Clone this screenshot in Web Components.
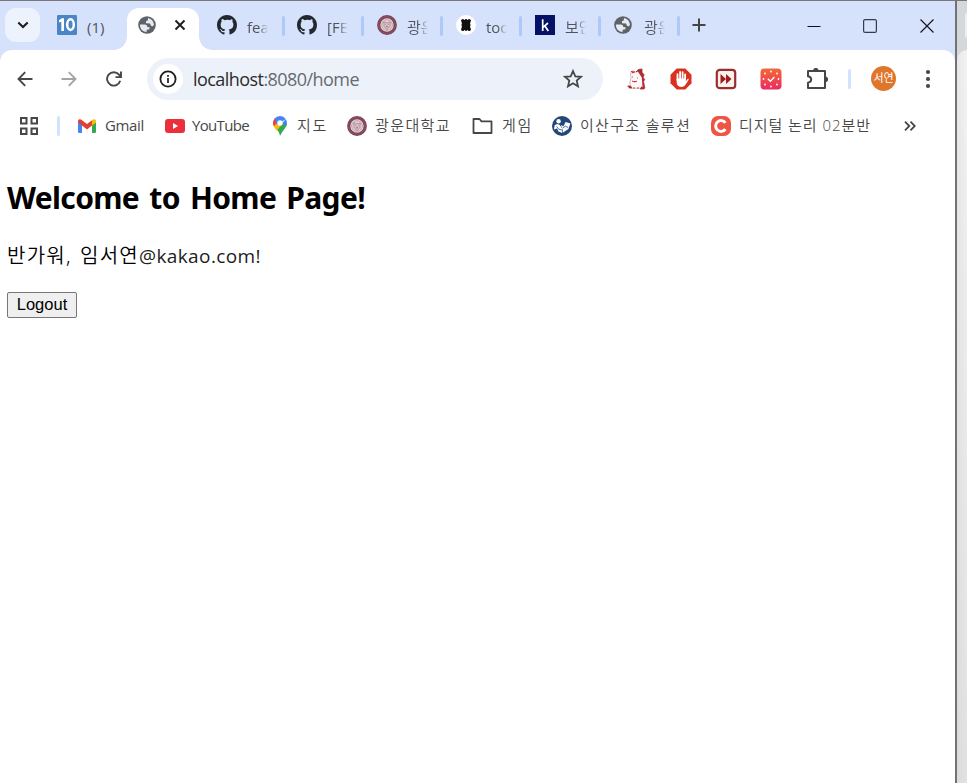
<!DOCTYPE html>
<html lang="ko"><head><meta charset="utf-8"><title>Home</title>
<style>html,body{margin:0;height:100%;overflow:hidden;background:#fff}</style></head><body>
<browser-desktop></browser-desktop>
<script>
const UI='"Open Sans","Noto Sans CJK KR",sans-serif';
const globe='<svg viewBox="0 0 20 20"><circle cx="10" cy="10" r="9.8" fill="#5f6368"/><path d="M2.200 9.400 7.800 9.400Q10.500 9.600 10.300 12.200L12.800 12.600 12.600 14.800 9.700 15.200 9.500 17.800Q3.500 17.500 2.200 11.500ZM11.200 2.200Q17.400 3.600 17.800 10L15.700 11.600 14.200 10.600 13.500 8.400 8.900 8.100 8.800 5.800 10.800 5Z" fill="#e6eaf3"/></svg>';
const seal='<svg viewBox="0 0 20 20"><circle cx="10" cy="10" r="8.300" fill="#e6d8dd" stroke="#7d4354" stroke-width="3.200"/><circle cx="10" cy="10" r="8.300" fill="none" stroke="#a87a88" stroke-width=".6" stroke-dasharray="1 1"/><circle cx="10" cy="10" r="5.400" fill="#dfccd2" stroke="#b99aa4" stroke-width=".8"/><path d="m6.800 6.800 1.800 1h2.800l1.800-1-.4 4.800-2.800 3-2.800-3Zm1.400 2.600h1m1.600 0h1M10 10v3m-1.300-1.400h2.600" fill="none" stroke="#a8798a" stroke-width=".8"/></svg>';
const ICONS={
down:'<svg viewBox="0 0 12 12"><path d="m1.3 3.500 4.700 4.600 4.700-4.600" fill="none" stroke="#1b1d20" stroke-width="2.100"/></svg>',
ten:'<svg viewBox="0 0 20 20"><rect width="20" height="20" rx="1.300" fill="#4a86c5"/><path d="M2 5.300 4.800 3.200H7V16H4.300V6.700L2 7.600Z" fill="#fff"/><ellipse cx="13.500" cy="9.600" rx="3.300" ry="5.300" fill="none" stroke="#fff" stroke-width="2.500"/></svg>',
globe,seal,
x:'<svg viewBox="0 0 12 12"><path d="m1.500 1.500 9 9m0-9-9 9" stroke="#1b1d20" stroke-width="1.900"/></svg>',
github:'<svg viewBox="0 0 16 16"><path fill="#22282e" d="M8 0C3.58 0 0 3.58 0 8c0 3.54 2.29 6.53 5.47 7.59.4.07.55-.17.55-.38 0-.19-.01-.82-.01-1.49-2.01.37-2.53-.49-2.69-.94-.09-.23-.48-.94-.82-1.13-.28-.15-.68-.52-.01-.53.63-.01 1.08.58 1.23.82.72 1.21 1.87.87 2.33.66.07-.52.28-.87.51-1.07-1.78-.2-3.64-.89-3.64-3.95 0-.87.31-1.59.82-2.15-.08-.2-.36-1.02.08-2.12 0 0 .67-.21 2.2.82A7.7 7.7 0 0 1 8 3.87c.68 0 1.36.09 2 .27 1.53-1.04 2.2-.82 2.2-.82.44 1.1.16 1.92.08 2.12.51.56.82 1.27.82 2.15 0 3.07-1.87 3.75-3.65 3.95.29.25.54.73.54 1.48 0 1.07-.01 1.93-.01 2.2 0 .21.15.46.55.38A8 8 0 0 0 16 8c0-4.42-3.58-8-8-8Z"/></svg>',
stamp:'<svg viewBox="0 0 20 20"><circle cx="10" cy="10" r="10" fill="#fff"/><rect x="5.600" y="5" width="8.800" height="10" fill="#111"/><g fill="#111"><circle cx="6.800" cy="5.600" r="1.600"/><circle cx="10" cy="5.400" r="1.400"/><circle cx="13.200" cy="5.600" r="1.600"/><circle cx="6.800" cy="14.400" r="1.600"/><circle cx="10" cy="14.600" r="1.400"/><circle cx="13.200" cy="14.400" r="1.600"/></g><path d="M5 8.300h.8M5 11.700h.8M14.200 8.300h.8M14.200 11.700h.8" stroke="#fff"/></svg>',
k:'<svg viewBox="0 0 20 20"><path fill="#051165" d="M0 0h20v20H0Z"/><path d="M7.700 4.200V16M13 8l-5 4.300M9.800 10.700 13.300 16" fill="none" stroke="#fff" stroke-width="1.700"/></svg>',
plus:'<svg viewBox="0 0 14 14"><path d="M7 .5v13M.5 7h13" stroke="#444746" stroke-width="2"/></svg>',
min:'<svg viewBox="0 0 14 14"><path d="M.5 7.500h13" stroke="#111"/></svg>',
max:'<svg viewBox="0 0 14 14"><rect x=".6" y=".6" width="12.800" height="12.800" rx="1.500" fill="none" stroke="#343b4b" stroke-width="1.200"/></svg>',
close:'<svg viewBox="0 0 14 14"><path d="m.5.5 13 13m0-13-13 13" stroke="#161820" stroke-width="1.200"/></svg>',
back:'<svg viewBox="0 0 16 16"><path d="M15.500 8H1.500M8.200 1.200 1.500 8l6.700 6.800" fill="none" stroke="#474747" stroke-width="1.900"/></svg>',
fwd:'<svg viewBox="0 0 16 16"><path d="M.5 8h14M7.800 1.200 14.500 8l-6.700 6.800" fill="none" stroke="#a4a4a4" stroke-width="1.900"/></svg>',
reload:'<svg viewBox="0 0 16 16"><path d="M14.200 9.800A6.700 6.700 0 1 1 13 3.700l1.600 1.800M15 .5v5.600H9.500" fill="none" stroke="#474747" stroke-width="1.900"/></svg>',
info:'<svg viewBox="0 0 18 18"><circle cx="9" cy="9" r="7.600" fill="none" stroke="#1f1f1f" stroke-width="1.800"/><path d="M9 8v5M9 5v1.800" stroke="#1f1f1f" stroke-width="1.700"/></svg>',
star:'<svg viewBox="0 0 20 20"><path d="m10 2 2.300 5.300 5.800.5-4.400 3.800L15 17.300l-5-3-5 3 1.300-5.700-4.400-3.800 5.800-.5Z" fill="none" stroke="#474747" stroke-width="1.800"/></svg>',
horse:'<svg viewBox="0 0 20 22"><path d="M5 10 4.500 5 6.800 2.800 9 4.200 14 2l2 2 .6 8 1.200 7-3 1.200H5L3.800 15Z" fill="#fff7f7" stroke="#d9a4a7" stroke-width=".8"/><path d="m5 3 1.700 2L9 3.800M10 4l2.300-2.500L16 1v3.500l2 2-.8 3 1.500 2-1.200 2 1 5-1.500.4-.8-9.500-2-3L12 3ZM1.500 18h3l1.300 2H3M15 19l4 .3-1 1.700H14M7 20h2m2 0h2M6 9h1m4 1h1M6 13l3 1 2-1" fill="#ac2b31" stroke="#ac2b31" stroke-width=".8"/></svg>',
hand:'<svg viewBox="0 0 22 22"><path d="M6.700.5h8.600l6.200 6.200v8.600l-6.200 6.200H6.700L.5 15.300V6.700Z" fill="#d9301f"/><path d="M7.500 12V6.200m2.600 5V4m2.500 7V4.200m2.500 7V6.300" stroke="#fff" stroke-width="1.800" stroke-linecap="round"/><path d="M6.600 10.500h9.300v2.700L17.500 11c.9-.6 1.600.1 1 .9l-3.200 5.200Q14 19 11.200 19 6.600 18.800 6.600 13Z" fill="#fff"/></svg>',
ff:'<svg viewBox="0 0 22 22"><rect x="1.800" y="1.800" width="18.400" height="18.400" rx="3" fill="#faf1ef" stroke="#992f2c" stroke-width="2.200"/><path d="m5.500 6 5.500 5-5.500 5Zm5.500 0 5.500 5-5.500 5Z" fill="#a11d1b"/></svg>',
clock:'<svg viewBox="0 0 22 22"><defs><linearGradient id="g" x2="0" y2="1"><stop stop-color="#f26b35"/><stop offset="1" stop-color="#eb2a62"/></linearGradient></defs><rect x=".5" y=".5" width="21" height="21" rx="4" fill="url(#g)"/><g fill="#fff"><circle cx="11" cy="3.500" r=".9"/><circle cx="11" cy="18.500" r=".9"/><circle cx="3.500" cy="11" r=".9"/><circle cx="18.500" cy="11" r=".9"/><circle cx="5" cy="5.500" r=".9"/><circle cx="17" cy="5.500" r=".9"/><circle cx="5" cy="16.500" r=".9"/><circle cx="17" cy="16.500" r=".9"/></g><path d="m7.800 10.700 2.600 2.500 4-4.100" fill="none" stroke="#fff" stroke-width="1.400"/></svg>',
puzzle:'<svg viewBox="0 0 22 22"><path d="M2 3h17v17H2v-5.300q3.200-.7 3.200-3.200T2 8.300Z" fill="none" stroke="#474747" stroke-width="2" stroke-linejoin="round"/><path d="M7 2.700a2.800 2.800 0 0 1 5.600 0ZM19.300 8.600a2.800 2.800 0 0 1 0 5.600Z" fill="#474747"/></svg>',
dots:'<svg viewBox="0 0 6 20"><g fill="#474747"><circle cx="3" cy="3" r="2.100"/><circle cx="3" cy="10" r="2.100"/><circle cx="3" cy="17" r="2.100"/></g></svg>',
grid:'<svg viewBox="0 0 18 18"><path d="M1 1h5.500v5.500H1Zm10.500 0H17v5.500h-5.500ZM1 11.500h5.500V17H1Zm10.500 0H17V17h-5.500Z" fill="none" stroke="#474747" stroke-width="2"/></svg>',
gmail:'<svg viewBox="0 0 18 14"><path d="M0 3v9.700Q0 14 1.300 14H4V5Z" fill="#4285f4"/><path d="M14 5v9h2.700q1.300 0 1.300-1.300V3Z" fill="#34a853"/><path d="M14 1.200 15 .5q3-1.200 3 1.800v1.200L14 6.600Z" fill="#fbbc04"/><path d="m4 6.600-4-3V2.300q0-3 3-1.800L9 5l5-3.800v5.400l-5 3.800Z" fill="#df4134"/></svg>',
yt:'<svg viewBox="0 0 20 14"><rect width="20" height="14" rx="3" fill="#ec303b"/><path d="m8 4 5 3-5 3Z" fill="#fff"/></svg>',
map:'<svg viewBox="0 0 14 20"><path d="M7 20Q6.400 15.500 1.700 11.300L9.500 6 14 7q0 3.200-2.500 6T7 20Z" fill="#34a853"/><path d="M.5 9.500Q2 13 3.800 14.600L11 6 7 5Z" fill="#fbbc04"/><path d="M1.600 2.600A7 7 0 0 0 .8 10.200L6 5Z" fill="#ea4335"/><path d="M1.600 2.600A7 7 0 0 1 12.700 3L4 9Z" fill="#4285f4"/><path d="M12.700 3A7 7 0 0 1 13.300 9.800L9 7.500Z" fill="#4285f4"/><circle cx="7" cy="7" r="2.700" fill="#fff"/></svg>',
folder:'<svg viewBox="0 0 21 16"><path d="M1.500 1h6l2 2.300h10v11.700h-18Z" fill="none" stroke="#474747" stroke-width="1.800" stroke-linejoin="round"/></svg>',
reader:'<svg viewBox="0 0 20 20"><circle cx="10" cy="10" r="10" fill="#24477a"/><circle cx="6.600" cy="5.200" r="2.200" fill="#fff"/><path d="M2.600 9.200 5 8l2.500.8 2.700 3.700v4.600L6.500 15.500 5 12.500 2 13.500Z" fill="#fff"/><path d="m8.700 9 2.700 1.200L13.600 6l4.800 1.500-2 5.600-5.300 3.300-1-4.400Z" fill="#fff"/><path d="m4.600 10.500 2.200 2.700 3.800 1M10.800 11.800l2.700-1.600 2.700 1.300" stroke="#24477a" fill="none" stroke-width=".8"/></svg>',
c:'<svg viewBox="0 0 20 20"><rect width="20" height="20" rx="7" fill="#ee5545"/><path d="M14.400 6.800A5.400 5.400 0 1 0 14.400 13.200" fill="none" stroke="#fff" stroke-width="3"/></svg>',
more:'<svg viewBox="0 0 12 10"><path d="m1 .7 4.300 4.300L1 9.300M6.500.7 10.800 5 6.500 9.300" fill="none" stroke="#474747" stroke-width="1.800"/></svg>'
};
function el(name,html,after){customElements.define(name,class extends HTMLElement{connectedCallback(){if(this.shadowRoot)return;const a=n=>this.getAttribute(n)||'';this.attachShadow({mode:'open'}).innerHTML=html(a);if(after)after(this,a)}})}
// <ui-icon name w h>: an inline picture in a box of fixed size
el('ui-icon',a=>`<style>:host{display:block;flex:none;width:${a('w')}px;height:${a('h')||a('w')}px}svg{display:block;width:100%;height:100%}</style>${ICONS[a('name')]}`);
// <fit-text w>: one line of text, tracked so that it fills its width
el('fit-text',()=>`<style>:host{display:block;flex:none;white-space:nowrap}span{display:inline-block;white-space:pre}</style><span><slot></slot></span>`,(t,a)=>{const s=t.shadowRoot.querySelector('span'),w=+a('w');t.style.width=w+'px';s.style.letterSpacing=(w-s.getBoundingClientRect().width)/t.textContent.length+'px'});
el('tab-item',a=>`<style>:host{display:flex;flex:none;box-sizing:border-box;width:${a('w')}px;height:49px;padding-left:${a('pad')||12}px;align-items:center;color:#50545a;font:15px/24px ${UI}}
ui-icon{margin:0 ${a('gap')||10}px 1px 0}.t{width:21px;overflow:hidden;white-space:nowrap;font-weight:${a('wt')||350};padding-top:3px;-webkit-mask:linear-gradient(90deg,#000 55%,transparent);mask:linear-gradient(90deg,#000 55%,transparent)}.plain{-webkit-mask:none;mask:none}
i{width:3px;height:20px;border-radius:2px;background:#adc8fa;margin-left:auto}</style><ui-icon name="${a('icon')}" w="${a('size')||20}"></ui-icon><div class="t ${a('plain')&&'plain'}"><slot></slot></div>${a('plain')?'':'<i></i>'}`);
el('active-tab',()=>`<style>:host{display:flex;flex:none;box-sizing:border-box;width:72px;height:42px;align-self:flex-end;background:#fff;border-radius:12px 12px 0 0;position:relative;padding:8px 0 0 11px;gap:18px}
.f{position:absolute;bottom:0;width:13px;height:13px}.l{left:-13px;background:radial-gradient(circle at 0 0,transparent 12.500px,#fff 13px)}.r{right:-13px;background:radial-gradient(circle at 100% 0,transparent 12.500px,#fff 13px)}ui-icon+ui-icon{margin-top:3px}</style><ui-icon name="globe" w="18"></ui-icon><ui-icon name="x" w="12"></ui-icon><b class="f l"></b><b class="f r"></b>`);
el('tab-strip',()=>`<style>:host{display:flex;height:49px;background:#d6e1fb;align-items:center}.s{width:35px;height:34px;margin:0 10px 1px 5px;border-radius:11px;background:#ecf3fc;display:grid;place-items:center;flex:none}</style>
<div class="s"><ui-icon name="down" w="12"></ui-icon></div><tab-item w="77" pad="7" icon="ten" plain="1" wt="400">(1)</tab-item><active-tab></active-tab>
<tab-item w="86" pad="18" icon="github" wt="400">feat</tab-item><tab-item w="79" icon="github" wt="400">[FEAT</tab-item><tab-item w="79" icon="seal" pad="13">광운</tab-item><tab-item w="79" icon="stamp" pad="13" wt="400">todo</tab-item><tab-item w="79" icon="k" pad="13">보안</tab-item><tab-item w="79" icon="globe" size="18" pad="13" gap="12">광운</tab-item>
<ui-icon name="plus" w="14" style="margin:0 0 1px 12px"></ui-icon><ui-icon name="min" w="14" style="margin-left:101px"></ui-icon><ui-icon name="max" w="14" style="margin-left:42px"></ui-icon><ui-icon name="close" w="14" style="margin-left:43px"></ui-icon>`);
el('address-bar',()=>`<style>:host{display:flex;box-sizing:border-box;flex:none;width:456px;height:42px;border-radius:21px;background:#edf2fa;align-items:center;padding:0 20px 0 6px;font:18px/28px ${UI};color:#666b70;margin:0 24px}.i{width:30px;height:30px;border-radius:50%;background:#fff;display:grid;place-items:center;margin-right:10px}.u{margin-right:auto}em{font-style:normal;color:#2b2b2b}</style>
<div class="i"><ui-icon name="info" w="18"></ui-icon></div><fit-text class="u" w="166"><em>localhost</em>:8080/home</fit-text><ui-icon name="star" w="20"></ui-icon>`);
el('tool-bar',()=>`<style>:host{display:flex;box-sizing:border-box;height:58px;align-items:center;padding-left:17px;background:#fff;border-radius:12px 12px 0 0}
.sep{width:3px;height:20px;border-radius:2px;background:#d3e3fd;margin:0 20px}.av{width:25px;height:25px;flex:none;border-radius:50%;background:#df762c;color:#fff;font:11px/23px "Noto Sans CJK KR",sans-serif;text-align:center;margin:0 29px 1px 0}</style>
<ui-icon name="back" w="16"></ui-icon><ui-icon name="fwd" w="16" style="margin-left:28px"></ui-icon><ui-icon name="reload" w="16" style="margin-left:29px"></ui-icon><address-bar style="margin-left:25px"></address-bar>
<ui-icon name="horse" w="20" h="22" style="margin-left:-1px"></ui-icon><ui-icon name="hand" w="22" style="margin-left:24px"></ui-icon><ui-icon name="ff" w="22" style="margin-left:23px"></ui-icon><ui-icon name="clock" w="22" style="margin-left:23px"></ui-icon><ui-icon name="puzzle" w="22" style="margin-left:24px"></ui-icon><div class="sep"></div><div class="av">서연</div><ui-icon name="dots" w="6" h="20"></ui-icon>`);
el('bookmark-item',a=>`<style>:host{display:flex;flex:none;align-items:center;gap:${a('gap')||8}px;margin-right:${a('mr')}px;font-weight:${a('wt')||350}}fit-text{margin-bottom:2px}</style><ui-icon name="${a('icon')}" w="${a('w')||20}" h="${a('h')||20}"></ui-icon><fit-text w="${a('tw')}">${a('label')}</fit-text>`);
el('bookmark-bar',()=>`<style>:host{display:flex;box-sizing:border-box;height:36px;padding-left:20px;align-items:center;font:15px/24px ${UI};color:#474747}.sep{width:3px;height:20px;border-radius:2px;background:#d3e3fd;margin:0 18px 0 19px}</style><ui-icon name="grid" w="18"></ui-icon><div class="sep"></div>
<bookmark-item icon="gmail" w="18" h="14" gap="9" tw="39" mr="21" wt="400" label="Gmail"></bookmark-item><bookmark-item icon="yt" h="14" gap="7" tw="57" mr="24" wt="400" label="YouTube"></bookmark-item><bookmark-item icon="map" w="14" gap="10" tw="31" mr="19" label="지도"></bookmark-item><bookmark-item icon="seal" tw="76" mr="21" label="광운대학교"></bookmark-item><bookmark-item icon="folder" w="21" h="16" gap="9" tw="31" mr="19" label="게임"></bookmark-item><bookmark-item icon="reader" tw="111" mr="20" label="이산구조 솔루션"></bookmark-item><bookmark-item icon="c" tw="132" mr="33" label="디지털 논리 02분반"></bookmark-item><ui-icon name="more" w="12" h="10"></ui-icon>`);
el('home-page',()=>`<style>:host{display:block;padding:32px 7px 0;color:#000;font:20px/30px "Noto Sans","Noto Sans CJK KR",sans-serif}h2{font-size:30px;line-height:44px;margin:0;word-spacing:3px}p{display:flex;margin:21px 0 21px;font-weight:350}.id{font-weight:400;font-family:"Open Sans",sans-serif;font-size:19px;color:#1c1c1c}button{box-sizing:border-box;width:70px;height:26px;padding:0 0 2px 0;border:1px solid #767676;border-radius:2px;background:#efefef;color:#000;font:16.500px/22px "Liberation Sans",sans-serif;display:block}</style><h2><fit-text w="358">Welcome to Home Page!</fit-text></h2><p><fit-text w="132" style="word-spacing:2px">반가워, 임서연</fit-text><fit-text class="id" w="122">@kakao.com!</fit-text></p><button>Logout</button>`);
el('browser-desktop',()=>`<style>:host{display:flex;box-sizing:border-box;height:783px;width:967px;border-top:1px solid #777}main{width:955px;flex:none;background:#fff}header{background:#d6e1fb}.edge{width:2px;flex:none;background:#727272}.other{flex:1;background:#d4d8dc;overflow:hidden;display:flex;flex-direction:column}.pill{height:25px;margin:12px 0 12px 8px;border-radius:10px 0 0 10px;background:#eceeef;flex:none}.body{flex:1;background:linear-gradient(#f0f0f000,#c8c8c866),linear-gradient(90deg,#e8e8e8,#f3f3f3);border-radius:10px 0 0 0}</style><main><header><tab-strip></tab-strip><tool-bar></tool-bar></header><bookmark-bar></bookmark-bar><home-page></home-page></main><div class="edge"></div><div class="other"><div class="pill"></div><div class="body"></div></div>`);
</script></body></html>
